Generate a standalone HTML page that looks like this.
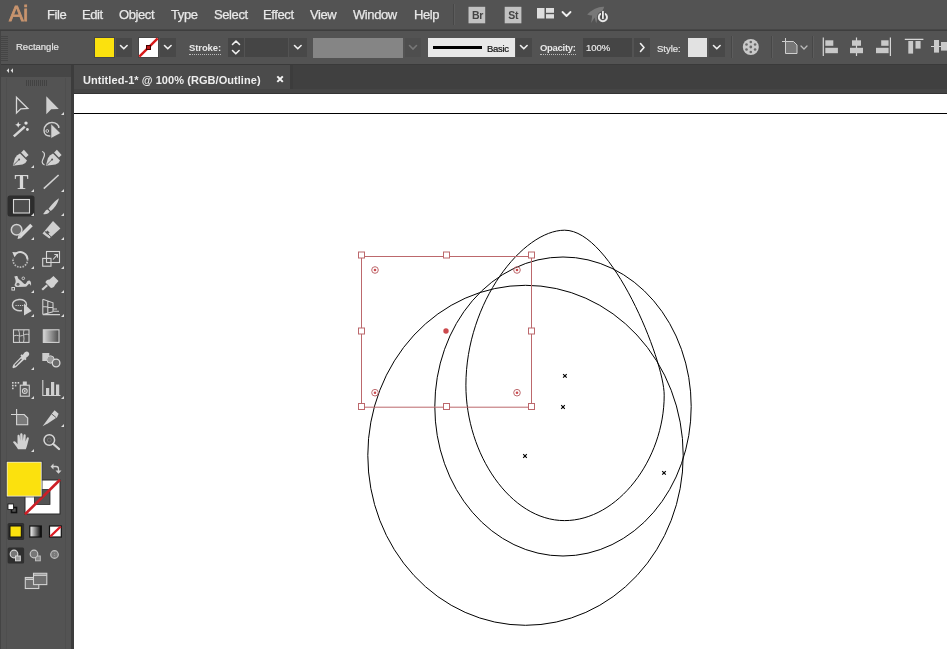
<!DOCTYPE html>
<html><head><meta charset="utf-8">
<style>
html,body{margin:0;padding:0;}
body{width:947px;height:649px;overflow:hidden;background:#535353;position:relative;font-family:"Liberation Sans",sans-serif;color:#e0e0e0;}
.abs{position:absolute;}
.menu,.ctx,.lbl,.gt{will-change:transform;}
#menubar{left:0;top:0;width:947px;height:29px;background:#535353;}
#menusep{left:0;top:29px;width:947px;height:2px;background:linear-gradient(#4a4a4a,#3a3a3a);}
#ctrl{left:0;top:31px;width:947px;height:32px;background:#535353;}
#ctrlsep{left:0;top:64px;width:947px;height:1px;background:#3a3a3a;}
#tabbar{left:72px;top:64px;width:875px;height:30px;background:#404040;}
#tabband{left:74px;top:89px;width:873px;height:4px;background:#454545;}
#tabline{left:74px;top:93px;width:873px;height:1px;background:#343434;}
#tabedge{left:290px;top:65px;width:3px;height:24px;background:#3c3c3c;}
#tab{left:74px;top:65px;width:216px;height:24px;background:#4b4b4b;}
#leftgap{left:71px;top:64px;width:3px;height:585px;background:#3c3c3c;}
#lefthead{left:0;top:64px;width:71px;height:13px;background:#464646;}
#tools{left:0;top:77px;width:71px;height:572px;background:#535353;}
#canvas{left:74px;top:94px;width:873px;height:555px;background:#fff;}
.menu{position:absolute;top:7px;font-size:13px;color:#e8e8e8;letter-spacing:-0.4px;-webkit-text-stroke:0.25px #e8e8e8;}
.ct{position:absolute;font-size:10px;color:#e0e0e0;}
</style></head><body>
<div id="menubar" class="abs"></div>
<div id="menusep" class="abs"></div>
<div id="ctrl" class="abs"></div>
<div id="tabbar" class="abs"></div>
<div id="tab" class="abs"></div>
<div id="tabband" class="abs"></div>
<div id="tabline" class="abs"></div>
<div id="tabedge" class="abs"></div>
<div id="lefthead" class="abs"></div>
<div id="tools" class="abs"></div>
<div id="leftgap" class="abs"></div>
<div id="ctrlsep" class="abs"></div>
<div id="canvas" class="abs"></div>

<!-- menu text -->
<div class="abs gt" style="left:8.500px;top:1px;font-size:22px;color:#c8946e;letter-spacing:-0.3px;-webkit-text-stroke:0.8px #c8946e;">Ai</div>
<div class="menu" style="left:47px;">File</div>
<div class="menu" style="left:82px;">Edit</div>
<div class="menu" style="left:119px;">Object</div>
<div class="menu" style="left:171px;">Type</div>
<div class="menu" style="left:214px;">Select</div>
<div class="menu" style="left:263px;">Effect</div>
<div class="menu" style="left:310px;">View</div>
<div class="menu" style="left:353px;">Window</div>
<div class="menu" style="left:414px;">Help</div>

<div class="abs gt" style="left:83px;top:73.500px;font-size:11px;font-weight:bold;color:#eee;letter-spacing:0.06px;">Untitled-1* @ 100% (RGB/Outline)</div>


<!-- control bar -->
<style>
.dd{position:absolute;top:38px;height:19px;width:16px;background:#484848;}
.fld{position:absolute;top:38px;height:19px;background:#454545;}
.lbl{position:absolute;top:43px;font-size:9.5px;color:#e8e8e8;font-weight:bold;letter-spacing:-0.2px;border-bottom:1px dotted #bbb;line-height:10.5px;height:10.5px;}
.ctx{position:absolute;font-size:9.5px;line-height:11px;color:#e4e4e4;-webkit-text-stroke:0.2px currentColor;}
</style>
<div class="ctx" style="left:15.500px;top:41.200px;letter-spacing:0px;">Rectangle</div>
<div class="abs" style="left:94px;top:37px;width:21px;height:21px;background:#464646;"></div>
<div class="abs" style="left:95px;top:38px;width:19px;height:19px;background:#fbe10e;"></div>
<div class="dd" style="left:116px;"></div>
<div class="abs" style="left:138px;top:37px;width:21px;height:21px;background:#464646;"></div>
<div class="abs" style="left:139px;top:38px;width:19px;height:19px;background:#fff;"></div>
<div class="dd" style="left:160px;"></div>
<div class="lbl" style="left:188.700px;letter-spacing:-0.1px;">Stroke:</div>
<div class="fld" style="left:228px;width:16px;"></div>
<div class="fld" style="left:245px;width:43px;"></div>
<div class="dd" style="left:289px;width:18px;"></div>
<div class="abs" style="left:313px;top:37.500px;width:90px;height:20.500px;background:#858585;"></div>
<div class="dd" style="left:405px;background:#4e4e4e;"></div>
<div class="abs" style="left:427.500px;top:37.500px;width:87px;height:19px;background:#e8e8e8;"></div>
<div class="abs" style="left:433px;top:46px;width:49px;height:3px;background:#000;"></div>
<div class="ctx" style="left:486.700px;top:42.600px;color:#111;letter-spacing:-0.3px;">Basic</div>
<div class="dd" style="left:516px;"></div>
<div class="lbl" style="left:540.300px;letter-spacing:-0.3px;">Opacity:</div>
<div class="fld" style="left:583px;width:49px;"></div>
<div class="ctx" style="left:586.200px;top:42.300px;color:#e8e8e8;letter-spacing:0px;">100%</div>
<div class="dd" style="left:634px;"></div>
<div class="ctx" style="left:657px;top:42.600px;letter-spacing:0px;">Style:</div>
<div class="abs" style="left:688px;top:38px;width:19px;height:19px;background:#e2e2e2;"></div>
<div class="dd" style="left:709px;"></div>
<svg class="abs" id="ctl" style="left:0;top:0" width="947" height="96" viewBox="0 0 947 96">
<!-- chevrons -->
<g fill="none" stroke="#f0f0f0" stroke-width="1.6" stroke-linecap="round" stroke-linejoin="round">
<path d="M120.500 45.500l3.300 3.300l3.300-3.300"/>
<path d="M164.500 45.500l3.300 3.300l3.300-3.300"/>
<path d="M294.500 45.500l3.300 3.300l3.300-3.300"/>
<path d="M520.500 45.500l3.300 3.300l3.300-3.300"/>
<path d="M713.500 45.500l3.300 3.300l3.300-3.300"/>
<path d="M232.500 44.500l3.500-3.500l3.500 3.500M232.500 50.500l3.300 3.300l3.300-3.300"/>
<path d="M640.500 43.500l3.500 4l-3.500 4"/>
<path d="M562.500 12l4 4l4-4" stroke-width="1.8"/>
</g>
<path d="M409.500 45.500l3.500 3.500l3.500-3.500" fill="none" stroke="#777" stroke-width="1.6" stroke-linecap="round"/>
<path d="M801 46l3 3l3-3" fill="none" stroke="#bbb" stroke-width="1.3" stroke-linecap="round"/>
<!-- stroke none swatch -->
<path d="M139.300 56.700L157.700 38.300" stroke="#d81a1a" stroke-width="2.400"/>
<rect x="146.500" y="45.500" width="4" height="4" fill="#c01818" stroke="#400" stroke-width="1"/>
<!-- separators -->
<g stroke="#474747" stroke-width="1"><path d="M453.500 4v21M731.500 36v22M771.500 36v22M812.500 36v22"/></g><g stroke="#5c5c5c" stroke-width="1"><path d="M454.500 4v21M732.500 36v22M772.500 36v22M813.500 36v22"/></g>
<path d="M277.300 76.400l5.500 5.500m0-5.500l-5.500 5.500" stroke="#f4f4f4" stroke-width="2"/>
<!-- left gripper -->
<g stroke="#454545" stroke-width="1"><path d="M1 36.5h7M1 38.5h7M1 40.5h7M1 42.5h7M1 44.5h7M1 46.5h7M1 48.5h7M1 50.5h7M1 52.5h7M1 54.5h7M1 56.5h7M1 58.5h7M1 60.5h7"/></g><path d="M0.500 31v33" stroke="#444" stroke-width="1"/>
<!-- Br St -->
<rect x="468.500" y="6.800" width="16.700" height="16.500" fill="#c2c2c2"/>
<rect x="504.700" y="6.800" width="16.700" height="16.500" fill="#c2c2c2"/>
<text x="477.500" y="18.600" font-family="Liberation Sans, sans-serif" font-size="10.5" fill="#444" text-anchor="middle" font-weight="bold" letter-spacing="-0.3">Br</text>
<text x="513.300" y="18.600" font-family="Liberation Sans, sans-serif" font-size="10.5" fill="#444" text-anchor="middle" font-weight="bold" letter-spacing="-0.3">St</text>
<!-- layout -->
<g fill="#dedede"><rect x="537" y="8" width="7.500" height="10.500"/><rect x="546" y="8" width="8" height="4.800"/><rect x="546" y="14.200" width="8" height="4.300"/></g>
<!-- rocket + power -->
<g fill="#787878"><path d="M604.200 6.800c-5-0.600-12 2.600-17 7.600c2.500 1.200 5.500 1.400 8.500 0.600c4-1.200 7.500-4.200 8.500-8.200z"/><path d="M592.500 13l-1.300 10l3.300-5.500l1.700 5.700l2.600-9.500z"/></g>
<circle cx="602.900" cy="17.300" r="6" fill="#535353"/>
<path d="M600.400 13.900a4.100 4.100 0 1 0 5 0" fill="none" stroke="#e8e8e8" stroke-width="1.900" stroke-linecap="round"/>
<path d="M602.900 11.800v6.400" stroke="#444" stroke-width="3.600"/>
<path d="M602.900 11.600v6.600" stroke="#eaeaea" stroke-width="1.800" stroke-linecap="round"/>
<!-- recolor wheel -->
<circle cx="750.800" cy="47" r="8" fill="#c9c9c9"/>
<g fill="#6a6a6a"><circle cx="750.800" cy="47" r="1.400"/><circle cx="750.800" cy="42" r="1.300"/><circle cx="755.100" cy="44.500" r="1.300"/><circle cx="755.100" cy="49.500" r="1.300"/><circle cx="750.800" cy="52" r="1.300"/><circle cx="746.500" cy="49.500" r="1.300"/><circle cx="746.500" cy="44.500" r="1.300"/></g>
<!-- doc setup -->
<path d="M785.500 41.500h8l3.500 3.500v8.500h-11.500z" fill="#777" stroke="#cfcfcf" stroke-width="1"/>
<path d="M782 41.500h3.500M785.500 38v3.500" stroke="#cfcfcf" stroke-width="1"/>
<!-- align icons -->
<g stroke="#d6d6d6" stroke-width="1.200"><path d="M823.300 37.500v18.500M856.500 37.500v18.500M890.400 37.500v18.500M904.800 39.400h18.600M931 46.500h16"/></g>
<g fill="#c9c9c9">
<rect x="825.300" y="40.300" width="8" height="5.500"/><rect x="825.300" y="47.800" width="12.600" height="5.400"/>
<rect x="852" y="40.300" width="9" height="5.500"/><rect x="850" y="47.800" width="13" height="5.400"/>
<rect x="881.200" y="40.300" width="7.400" height="5.500"/><rect x="876" y="47.800" width="12.600" height="5.400"/>
<rect x="908.300" y="41" width="4.800" height="12.600"/><rect x="915.500" y="41" width="5.100" height="7.600"/>
<rect x="934" y="40" width="5" height="12.600"/><rect x="941" y="42" width="6" height="8.600"/>
</g>
</svg>

<!-- tools panel -->
<svg class="abs" id="tl" style="left:0;top:64px" width="74" height="585" viewBox="0 64 74 585">
<defs>
<linearGradient id="gr1" x1="0" x2="1" y1="0" y2="0"><stop offset="0" stop-color="#d8d8d8"/><stop offset="1" stop-color="#4a4a4a"/></linearGradient>
<linearGradient id="gr2" x1="0" x2="1" y1="0" y2="0"><stop offset="0" stop-color="#fff"/><stop offset="1" stop-color="#000"/></linearGradient>
<path id="tri" d="M3 0v3h-3z" fill="#dcdcdc"/>
<g id="pen"><path d="M0 0L2.200-7.800Q4.200-11.300 7.200-12.300L14.200-5.300Q13.200-2.300 9.700-1.300Z" fill="#d2d2d2"/><path d="M8.300-13.400L11.100-16.100L15.800-10.900L13.100-8.200Z" fill="#d2d2d2"/><path d="M0.500-0.500L6-6" stroke="#555" stroke-width="0.900"/><circle cx="6.300" cy="-6.300" r="1" fill="#555"/></g>
</defs>
<path d="M0.500 64v585" stroke="#444" stroke-width="1"/><path d="M6.500 78v571M65.500 78v571" stroke="#4e4e4e" stroke-width="1"/>
<!-- collapse arrows -->
<path d="M9 68.200l-2.400 2.400l2.400 2.400zM13 68.200l-2.400 2.400l2.400 2.400z" fill="#dcdcdc"/>
<!-- gripper -->
<g stroke="#414141" stroke-width="0.900"><path d="M26.500 80v6M28.500 80v6M30.500 80v6M32.500 80v6M34.500 80v6M36.500 80v6M38.500 80v6M40.500 80v6M42.500 80v6M44.500 80v6M46.500 80v6"/></g>
<!-- selection -->
<path d="M16.500 97.300V113l4.300-4.200l7-0.300z" fill="none" stroke="#d6d6d6" stroke-width="1.300" stroke-linejoin="miter"/>
<path d="M46.300 96.300V114.300l4.900-5.100l7.600-0.300z" fill="#cfcfcf"/>
<use href="#tri" x="61" y="112"/>
<!-- wand -->
<path d="M13.800 136.400L24.800 126.600" stroke="#d6d6d6" stroke-width="2.500"/>
<path d="M18.200 121.800l0.900 2.100l2.100 0.900l-2.100 0.900l-0.900 2.100l-0.900-2.100l-2.100-0.900l2.100-0.900z" fill="#e0e0e0"/>
<circle cx="26" cy="123.100" r="1.700" fill="#e0e0e0"/><circle cx="27.400" cy="129.500" r="1.400" fill="#e0e0e0"/>
<!-- lasso -->
<path d="M50.500 136c-4 0.500-6.500-2-6.500-5.500c0-5 4-8 8-8c4 0 7 2.500 6.800 5.500" fill="none" stroke="#d0d0d0" stroke-width="1.400"/>
<circle cx="47.300" cy="131" r="1.400" fill="none" stroke="#d0d0d0" stroke-width="1"/>
<path d="M50.900 123.600V138.500L60.700 133.200z" fill="#d2d2d2" stroke="#444" stroke-width="0.600"/>
<!-- pen / curvature -->
<use href="#pen" x="12.800" y="165.800"/><use href="#tri" x="31" y="165"/>
<use href="#pen" x="45.800" y="165.800"/>
<path d="M42 151.500c3 0.500 3 3.500 1.500 6.500s-2.500 5.500 1 7" fill="none" stroke="#d6d6d6" stroke-width="1.200"/>
<!-- T / line -->
<text x="21.600" y="188.700" font-family="Liberation Serif, serif" font-weight="bold" font-size="21" fill="#d8d8d8" text-anchor="middle">T</text>
<use href="#tri" x="31" y="189"/>
<path d="M43.800 188.700L58.600 175" stroke="#d2d2d2" stroke-width="1.600"/><use href="#tri" x="61" y="189"/>
<!-- rectangle (selected) / brush -->
<rect x="7.500" y="195.500" width="27" height="21" rx="2.500" fill="#2d2d2d"/>
<rect x="13.500" y="199.500" width="16" height="13.500" fill="#4e4e4e" stroke="#d8d8d8" stroke-width="1.100"/>
<use href="#tri" x="31" y="213"/>
<path d="M59 198.200c-3.500 2-8 7-10.500 10.500l2.200 2.200c3.500-2.500 7-7 8.300-12.700z" fill="#d2d2d2"/>
<path d="M47.500 209.500c-2.500 0.500-2.500 3-4.500 4.500c3 0.700 6-0.500 6.700-2.500z" fill="#d2d2d2"/>
<use href="#tri" x="61" y="213"/>
<!-- shaper / eraser -->
<circle cx="16.600" cy="229.800" r="5.300" fill="#6c6c6c" stroke="#d2d2d2" stroke-width="1.500"/>
<path d="M31.500 225L20 236.500" stroke="#d8d8d8" stroke-width="3.600"/><path d="M17.500 239l1-4l3 3z" fill="#d8d8d8"/>
<use href="#tri" x="31" y="237"/>
<path d="M42.500 233.500L53 221L60.400 228.500L49.300 238.600Z" fill="#d0d0d0"/><path d="M44.600 231l7 6.300" stroke="#555" stroke-width="1"/><rect x="46" y="231" width="3" height="3" fill="#555" transform="rotate(42 47.500 232.500)"/>
<use href="#tri" x="61" y="237"/>
<!-- rotate / scale -->
<path d="M16 253.500a7.300 7.300 0 0 1 11.500 5.500" fill="none" stroke="#d4d4d4" stroke-width="2"/>
<path d="M27.500 259a7.300 7.300 0 1 1-14.300-1" fill="none" stroke="#b8b8b8" stroke-width="1.700" stroke-dasharray="1.600 1.200"/>
<path d="M12.300 252l5.800 0.400l-3.600 4.800z" fill="#d6d6d6"/>
<use href="#tri" x="31" y="266"/>
<rect x="46.500" y="251.500" width="13" height="11" fill="none" stroke="#d6d6d6" stroke-width="1.100"/>
<rect x="42.700" y="258.400" width="8.300" height="7.800" fill="none" stroke="#d6d6d6" stroke-width="1.100"/>
<path d="M53 259.500l4-4.300M54.300 254.500h3.200v3.200" fill="none" stroke="#d6d6d6" stroke-width="1.100"/>
<use href="#tri" x="61" y="266"/>
<!-- width / puppet pin -->
<path d="M14.300 276.600c1-0.800 2.300-0.900 3.200-0.400c0.300 1.500 0.800 2.600 1.800 3.400c1.500 1 3 2.200 4.200 3.700c1 1.200 2.300 0.800 3-0.600c0.800-1.700 2-2.500 3.300-2c1.300 0.500 1.500 3 1.200 5.200c-0.700-1.200-1.300-2.300-2.200-2c-1 0.600-1.700 2.700-3.600 2.900l-8.700 0.200c-1.800-0.300-2.400-1.700-1.500-3.200c1-1.400 1-3.400-0.700-7.200z" fill="#d0d0d0"/>
<circle cx="18" cy="284.300" r="1.500" fill="#666"/><circle cx="23.300" cy="278.300" r="1.300" fill="#535353" stroke="#d2d2d2" stroke-width="0.900"/><rect x="11.900" y="287.500" width="2.600" height="2.600" fill="#535353" stroke="#e0e0e0" stroke-width="0.900"/>
<use href="#tri" x="31" y="290"/>
<path d="M49.500 279.500l4-3.500l5 5l-3.500 4c-0.500 2-2.500 3-4 3l-5.500-5.500c0-1.500 1.500-3 4-3z" fill="#d2d2d2"/><path d="M47.200 285.200l-5 4.500" stroke="#d2d2d2" stroke-width="2.200"/>
<use href="#tri" x="61" y="290"/>
<!-- shape builder / perspective grid -->
<path d="M19 299.500c4-0.500 7.500 2 7.500 5c0 1-0.500 1.500-1 2M22 310.500c-5 1-9.500-1.500-9.500-5.500c0-3 2.500-5 6.500-5.500" fill="none" stroke="#d0d0d0" stroke-width="1.400"/>
<path d="M15.500 305.500h8" stroke="#d0d0d0" stroke-width="1.200" stroke-dasharray="1.200 1"/>
<path d="M24 303.500V315.500L31.700 311z" fill="#d2d2d2"/>
<use href="#tri" x="31" y="314"/>
<path d="M42.800 299.300V314.600M42.800 299.300L53 302.800V311.800M42.800 314.600H60M47.800 301v12M42.800 306.500L53 307.500M53 311.800L42.800 314.600M53 309h4M53 311.300h6" fill="none" stroke="#d0d0d0" stroke-width="1.100"/>
<use href="#tri" x="61" y="314"/>
<!-- mesh / gradient -->
<rect x="13.500" y="329.800" width="15.500" height="12.600" fill="none" stroke="#d2d2d2" stroke-width="1.100"/>
<path d="M13.500 336c4-2 6 1 9-0.500s4-1.500 6.500-1M18.500 329.800c2 4 0 8 1 12.600M24 329.800c-1.500 4 1 8-0.500 12.600" fill="none" stroke="#c8c8c8" stroke-width="1"/>
<rect x="43.300" y="329.800" width="15.700" height="12.600" fill="url(#gr1)" stroke="#d2d2d2" stroke-width="1.100"/>
<!-- eyedropper / blend -->
<path d="M28.500 352.300c1.500 1.500 0.500 3.500-1 4.500l-1.700 1.300l0.700 1l-1.200 1.200l-1-0.800l-8.300 7.800l-2.800 0.900l-0.800-0.900l0.900-2.600l8-8.200l-0.900-1l1.300-1.200l1 0.700l1.300-1.700c1-1.500 3-2.500 4.500-1z" fill="#d2d2d2"/>
<path d="M21.500 358.800l-6.500 6.700" stroke="#535353" stroke-width="1.200"/>
<use href="#tri" x="31" y="367"/>
<rect x="42.300" y="353" width="7" height="8" fill="#cdcdcd"/>
<circle cx="50.500" cy="359.500" r="3.700" fill="#9a9a9a" stroke="#d2d2d2" stroke-width="1"/>
<circle cx="56.100" cy="363" r="3.800" fill="#6a6a6a" stroke="#dadada" stroke-width="1.300"/>
<!-- symbol sprayer / graph -->
<rect x="20.300" y="385.200" width="9" height="11" fill="#5a5a5a" stroke="#d2d2d2" stroke-width="1.100"/>
<rect x="22.800" y="381.500" width="4" height="3.500" fill="#d2d2d2"/>
<circle cx="24.800" cy="391" r="2.400" fill="none" stroke="#d2d2d2" stroke-width="1.100"/><circle cx="24.800" cy="391" r="0.900" fill="#d2d2d2"/>
<g fill="#d2d2d2"><rect x="12" y="382" width="1.600" height="1.600"/><rect x="14.800" y="382" width="1.600" height="1.600"/><rect x="17.600" y="382" width="1.600" height="1.600"/><rect x="12" y="384.800" width="1.600" height="1.600"/><rect x="14.800" y="384.800" width="1.600" height="1.600"/><rect x="12" y="387.600" width="1.600" height="1.600"/></g>
<use href="#tri" x="31" y="396"/>
<path d="M42.800 380V395.500H60.500" fill="none" stroke="#d2d2d2" stroke-width="1.100"/>
<g fill="#cfcfcf"><rect x="46" y="388" width="3.200" height="7"/><rect x="51" y="382" width="3.200" height="13"/><rect x="56" y="384.500" width="3.200" height="10.500"/></g>
<use href="#tri" x="61" y="396"/>
<!-- artboard / slice -->
<path d="M16.600 414.500h7.600l3.500 3.500v6.700h-11.100z" fill="#7a7a7a" stroke="#d6d6d6" stroke-width="1.100"/>
<path d="M11 414.500h5.600M16.600 409v5.500" stroke="#d6d6d6" stroke-width="1.100"/>
<path d="M42.600 426.200l9.500-13l2.500-3l4 3.500l-1.500 3.500l-9 6z" fill="#d2d2d2"/><path d="M51.500 413.800l4.500 3.700" stroke="#535353" stroke-width="0.900"/>
<use href="#tri" x="61" y="424"/>
<!-- hand / zoom -->
<path d="M18 449.300c-1.500-3-3.500-5-5-7c0.500-1.500 2-1 3 0l1.500 2v-8.500c0-1.500 2-1.500 2.200 0l0.500 5v-6.500c0-1.500 2.200-1.500 2.300 0l0.300 6.500l0.700-5.500c0.200-1.500 2.200-1.300 2.200 0.200l-0.200 6l1.300-3.500c0.500-1.300 2.300-0.800 2 0.700l-1.500 6c-0.500 2-1 3-1.500 4.600z" fill="#d2d2d2"/>
<use href="#tri" x="31" y="449"/>
<circle cx="49.300" cy="440" r="5.300" fill="none" stroke="#d6d6d6" stroke-width="1.500"/>
<circle cx="49.300" cy="440" r="2" fill="none" stroke="#777" stroke-width="0.800"/>
<path d="M53.300 444l5.700 5" stroke="#d6d6d6" stroke-width="2.300" stroke-linecap="round"/>
<!-- stroke swatch -->
<rect x="25" y="480" width="35" height="34" fill="#fff" stroke="#2a2a2a" stroke-width="1"/>
<rect x="34.500" y="489.500" width="15.500" height="15" fill="#535353" stroke="#2a2a2a" stroke-width="0.800"/>
<path d="M25 514.300L60 479.800" stroke="#cc1e26" stroke-width="2.600"/>
<!-- fill swatch -->
<rect x="7" y="462" width="34.300" height="34.200" fill="#fbe10e" stroke="#ededed" stroke-width="1"/>
<rect x="6.200" y="461.200" width="35.900" height="35.800" fill="none" stroke="#3a3a3a" stroke-width="0.700"/>
<!-- swap arrows -->
<path d="M52.500 466.500h3.500c1.500 0 2.500 1 2.500 2.500v2.500" fill="none" stroke="#d2d2d2" stroke-width="1.300"/>
<path d="M53.500 463.500l-3 3l3 3zM55.500 470.500l3 3.300l3-3.300z" fill="#d2d2d2"/>
<!-- default fill/stroke -->
<rect x="11.500" y="507.500" width="5" height="5" fill="none" stroke="#111" stroke-width="1.600"/>
<rect x="8" y="504" width="5.500" height="5.500" fill="#fff" stroke="#111" stroke-width="0.800"/>
<!-- color / gradient / none -->
<rect x="7.600" y="523" width="16.500" height="17" rx="1.500" fill="#2f2f2f"/>
<rect x="10" y="526" width="11.300" height="11" fill="#fbe10e" stroke="#111" stroke-width="1"/>
<rect x="29.800" y="526" width="11.500" height="11" fill="url(#gr2)" stroke="#111" stroke-width="1.200"/>
<rect x="49.500" y="526" width="11.800" height="11" fill="#fff" stroke="#111" stroke-width="1.200"/>
<path d="M50.300 536.500L60.700 526.500" stroke="#dd1c24" stroke-width="2.400"/>
<!-- draw modes -->
<rect x="7.600" y="547.500" width="16.500" height="16" rx="1.500" fill="#2f2f2f"/>
<circle cx="14" cy="554" r="3.800" fill="#777" stroke="#d6d6d6" stroke-width="1.200"/><rect x="15.500" y="556" width="4.800" height="4.800" fill="#999" stroke="#d6d6d6" stroke-width="1"/>
<rect x="35.500" y="556" width="4.800" height="4.800" fill="#888" stroke="#bdbdbd" stroke-width="1"/><circle cx="34" cy="554" r="3.800" fill="#777" stroke="#c6c6c6" stroke-width="1.200"/>
<circle cx="54.500" cy="554.500" r="3.800" fill="#7a7a7a" stroke="#bdbdbd" stroke-width="1.200"/><path d="M54.500 551v7" stroke="#9a9a9a" stroke-width="0.800" stroke-dasharray="1 1"/>
<!-- screen mode -->
<rect x="25.300" y="577.500" width="13.500" height="11" fill="#6e6e6e" stroke="#d2d2d2" stroke-width="1.100"/><path d="M25.300 579.300h13.500" stroke="#d2d2d2" stroke-width="1.400"/>
<rect x="33.500" y="573.300" width="13.300" height="11.300" fill="#707070" stroke="#d2d2d2" stroke-width="1.100"/><path d="M33.500 575.200h13.300" stroke="#d2d2d2" stroke-width="1.400"/>
</svg>
<svg class="abs" id="cv" style="left:0;top:0" width="947" height="649" viewBox="0 0 947 649">
<line x1="74" y1="113.5" x2="947" y2="113.5" stroke="#000" stroke-width="1"/>
<g fill="none" stroke="#000" stroke-width="1">
<path d="M564.6 230.2C611.8 230.2 664.2 360.4 664.2 395.2C664.2 459.6 617.8 520.6 564.5 520.6C510.6 520.6 465.9 454.1 465.9 385.2C465.9 301.6 523.1 230.2 564.6 230.2Z"/>
<ellipse cx="563" cy="406.5" rx="128.2" ry="149.5"/>
<ellipse cx="525.5" cy="455.3" rx="157.7" ry="170"/>
</g>
<g stroke="#000" stroke-width="1.15"><path d="M563.1 374.1l3.6 3.6m0-3.6l-3.6 3.6M561.2 405.2l3.6 3.6m0-3.6l-3.6 3.6M523.2 454.2l3.6 3.6m0-3.6l-3.6 3.6M662.2 471.1l3.6 3.6m0-3.6l-3.6 3.6"/></g>
<g fill="none" stroke="#bc686c" stroke-width="1">
<path d="M361.500 256.500H531.500V407.200H361.500Z"/>
<g fill="#fff">
<rect x="358.500" y="252" width="6" height="6"/><rect x="443.500" y="252" width="6" height="6"/><rect x="528.500" y="252" width="6" height="6"/>
<rect x="358.500" y="328" width="6" height="6"/><rect x="528.500" y="328" width="6" height="6"/>
<rect x="358.500" y="403.500" width="6" height="6"/><rect x="443.500" y="403.500" width="6" height="6"/><rect x="528.500" y="403.500" width="6" height="6"/>
</g>
<g stroke-width="1"><circle cx="375" cy="270" r="3.300"/><circle cx="517" cy="270" r="3.300"/><circle cx="375" cy="392.700" r="3.300"/><circle cx="517" cy="392.700" r="3.300"/></g>
</g>
<g fill="#cc4a4e"><circle cx="375" cy="270" r="1.300"/><circle cx="517" cy="270" r="1.300"/><circle cx="375" cy="392.700" r="1.300"/><circle cx="517" cy="392.700" r="1.300"/><circle cx="446" cy="331" r="2.700"/></g>
</svg>
</body></html>
